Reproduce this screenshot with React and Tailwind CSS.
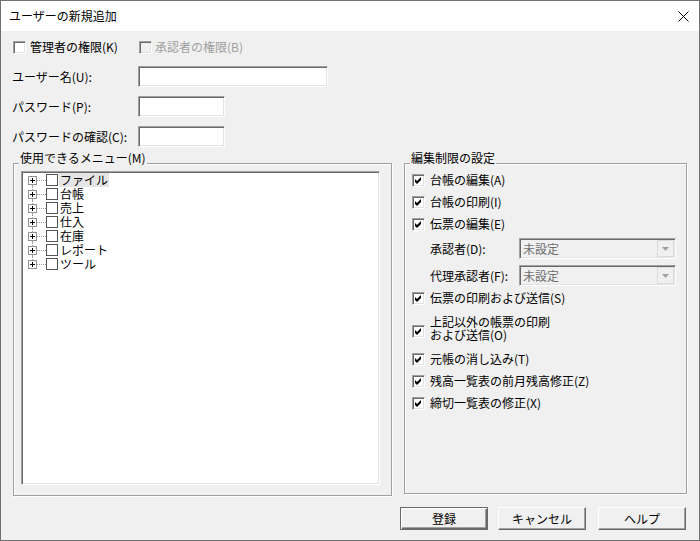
import clsx from 'clsx';

const sunken =
  'border border-t-[#a0a0a0] border-l-[#a0a0a0] border-b-white border-r-white shadow-[inset_1px_1px_0_#696969,inset_-1px_-1px_0_#e3e3e3]';
const etched = 'border border-[#a0a0a0] shadow-[inset_1px_1px_0_#fff,1px_1px_0_#fff]';

function Box({ checked, disabled }) {
  return (
    <span
      className={clsx(
        'flex h-[13px] w-[13px] shrink-0 items-center justify-center',
        sunken,
        disabled ? 'bg-[#f0f0f0]' : 'bg-white'
      )}
    >
      {checked && (
        <svg width="9" height="9" viewBox="0 0 9 9">
          <polygon points="1,3 3,5 7,1 7,4 3,8 1,6" fill="#000" />
        </svg>
      )}
    </span>
  );
}

function Field({ label, width }) {
  return (
    <div className="mt-[9px] flex h-[21px] items-center pl-[11px]">
      <span className="w-[126px]">{label}</span>
      <div className={clsx('h-[21px] bg-white', sunken)} style={{ width }} />
    </div>
  );
}

function Combo() {
  return (
    <div className={clsx('flex h-[21px] w-[157px] items-center bg-[#f0f0f0] pl-[3px] pr-[1px] text-[#6d6d6d]', sunken)}>
      <span className="flex-1">未設定</span>
      <span className="flex h-[17px] w-[17px] items-center justify-center border border-[#dcdcdc] bg-[#f0f0f0]">
        <svg width="7" height="4" viewBox="0 0 7 4">
          <polygon points="0,0 7,0 3.5,4" fill="#a0a0a0" />
        </svg>
      </span>
    </div>
  );
}

const menus = ['ファイル', '台帳', '売上', '仕入', '在庫', 'レポート', 'ツール'];

function TreeRow({ label, first, last }) {
  return (
    <div className="flex h-[14px] items-center pl-[6px]">
      <div className="flex h-[14px] w-[9px] flex-col items-center">
        <span className={clsx('h-[3px] w-0 border-l border-dotted', first ? 'border-transparent' : 'border-[#a0a0a0]')} />
        <span className="flex h-[9px] w-[9px] items-center justify-center border border-[#919191] bg-white">
          <svg width="7" height="7" viewBox="0 0 7 7">
            <path d="M1 3.5H6M3.5 1V6" stroke="#000" strokeWidth="1" />
          </svg>
        </span>
        <span className={clsx('h-[2px] w-0 border-l border-dotted', last ? 'border-transparent' : 'border-[#a0a0a0]')} />
      </div>
      <span className="w-[9px] border-t border-dotted border-[#a0a0a0]" />
      <span className="h-[12px] w-[12px] border border-[#555] bg-white" />
      <span className={clsx('ml-[1px] flex h-[14px] items-center px-[1px] text-[12px] leading-[14px]', first && 'bg-[#e5e5e5]')}>
        {label}
      </span>
    </div>
  );
}

function Check({ label }) {
  return (
    <div className="flex h-[22px] items-center gap-[5px]">
      <Box checked />
      <span>{label}</span>
    </div>
  );
}

function Button({ children, primary, className }) {
  return (
    <button
      className={clsx(
        'flex h-[23px] w-[88px] items-center justify-center bg-[#f0f0f0] text-[12px]',
        primary
          ? 'border border-[#696969] shadow-[inset_1px_1px_0_#fff,inset_-1px_-1px_0_#696969,inset_-2px_-2px_0_#a0a0a0]'
          : 'border border-t-white border-l-white border-b-[#696969] border-r-[#696969] shadow-[inset_-1px_-1px_0_#a0a0a0]',
        className
      )}
    >
      {children}
    </button>
  );
}

export default function App() {
  return (
    <div className="flex h-[541px] w-[700px] flex-col overflow-hidden border border-[#707070] bg-[#f0f0f0] font-['Noto_Sans_CJK_JP','Noto_Sans',sans-serif] text-[12px] leading-[14px] text-black">
      {/* title bar */}
      <div className="flex h-[30px] shrink-0 items-center justify-between bg-white pl-[8px] pr-[10px]">
        <span>ユーザーの新規追加</span>
        <svg width="11" height="11" viewBox="0 0 11 11">
          <path d="M0.5 0.5L10.5 10.5M10.5 0.5L0.5 10.5" stroke="#000" strokeWidth="1" />
        </svg>
      </div>

      <div className="flex flex-col pt-[6px]">
        <div className="flex h-[20px] items-center pl-[12px]">
          <label className="flex w-[126px] items-center gap-[4px]">
            <Box />
            <span>管理者の権限(K)</span>
          </label>
          <label className="flex items-center gap-[3px] text-[#a0a0a0]">
            <Box disabled />
            <span>承認者の権限(B)</span>
          </label>
        </div>

        <Field label="ユーザー名(U):" width={190} />
        <Field label="パスワード(P):" width={87} />
        <Field label="パスワードの確認(C):" width={87} />

        <div className="mt-[16px] flex items-start gap-[12px] pl-[12px]">
          {/* menu group */}
          <div className={clsx('relative h-[333px] w-[379px] pl-[7px] pt-[7px]', etched)}>
            <span className="absolute left-[5px] top-[-13px] bg-[#f0f0f0] px-[1px]">使用できるメニュー(M)</span>
            <div className={clsx('h-[314px] w-[359px] bg-white pt-[1px]', sunken)}>
              {menus.map((m, i) => (
                <TreeRow key={m} label={m} first={i === 0} last={i === menus.length - 1} />
              ))}
            </div>
          </div>

          {/* edit restrictions */}
          <div className={clsx('relative flex h-[331px] w-[283px] flex-col pl-[7px] pt-[5px]', etched)}>
            <span className="absolute left-[5px] top-[-13px] bg-[#f0f0f0] px-[1px]">編集制限の設定</span>
            <Check label="台帳の編集(A)" />
            <Check label="台帳の印刷(I)" />
            <Check label="伝票の編集(E)" />
            <div className="mt-[3px] flex h-[21px] items-center pl-[18px]">
              <span className="w-[89px]">承認者(D):</span>
              <Combo />
            </div>
            <div className="mt-[6px] flex h-[21px] items-center pl-[18px]">
              <span className="w-[89px]">代理承認者(F):</span>
              <Combo />
            </div>
            <div className="mt-[1px]">
              <Check label="伝票の印刷および送信(S)" />
            </div>
            <div className="flex h-[39px] items-start gap-[5px]">
              <span className="mt-[16px]">
                <Box checked />
              </span>
              <span className="mt-[6px] leading-[13px]">
                上記以外の帳票の印刷
                <br />
                および送信(O)
              </span>
            </div>
            <Check label="元帳の消し込み(T)" />
            <Check label="残高一覧表の前月残高修正(Z)" />
            <Check label="締切一覧表の修正(X)" />
          </div>
        </div>

        <div className="mt-[11px] flex justify-end pr-[13px]">
          <Button primary>登録</Button>
          <Button className="ml-[10px]">キャンセル</Button>
          <Button className="ml-[12px]">ヘルプ</Button>
        </div>
      </div>
    </div>
  );
}
